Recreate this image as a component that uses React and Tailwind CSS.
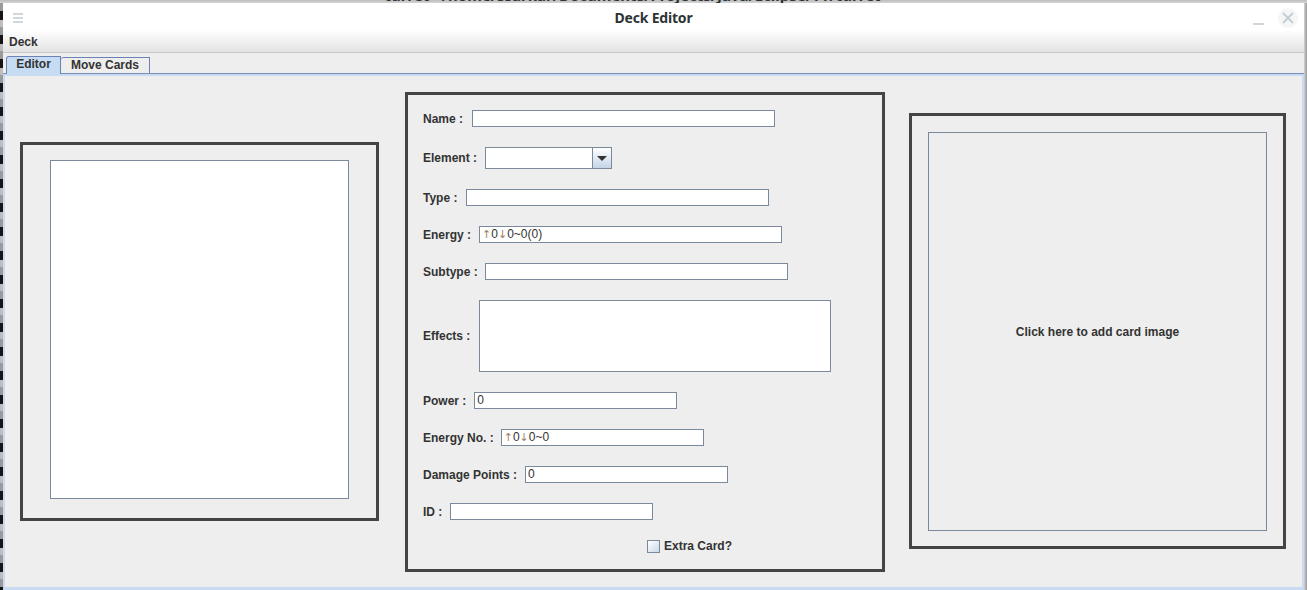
import React from "react";

const LBL = "text-[12px] font-bold text-[#333333] whitespace-nowrap";
const BOX = "border border-[#7a8a9c] bg-white";

function Input({ className = "", value }) {
  return (
    <div className={`${BOX} h-[17px] pl-[2px] text-[12px] leading-[15px] text-[#333333] ${className}`}>
      {value}
    </div>
  );
}

function Arrowed({ parts }) {
  // "↑0↓0~0" style text: arrows rendered thin / lighter
  return parts.map((p, i) =>
    p === "↑" || p === "↓" ? (
      <span key={i} className="text-[11px] text-[#a47e62] font-['DejaVu_Sans',sans-serif]">
        {p}
      </span>
    ) : (
      <span key={i}>{p}</span>
    )
  );
}

function Row({ className, label, children }) {
  return (
    <div className={`flex items-center gap-2 ${className}`}>
      <span className={LBL}>{label}</span>
      {children}
    </div>
  );
}

export default function App() {
  return (
    <div className="w-[1307px] h-[590px] overflow-hidden flex flex-col bg-[#cfcfcf] font-['Liberation_Sans',Arial,sans-serif]">
      {/* window behind, only its title bottom shows */}
      <div className="h-[3px] shrink-0 overflow-hidden flex justify-center pr-[42px] bg-[linear-gradient(to_bottom,#bdbdbd,#d4d4d4)]">
        <div className="-mt-[12px] text-[15px] leading-[15px] font-bold text-[#2e3436] font-['Noto_Sans',sans-serif] whitespace-nowrap">
          turret - /home/ssarkar/Documents/Projects/Java/Eclipse/TT/turret
        </div>
      </div>

      <div className="flex flex-1 min-h-0">
        <div className="w-[3px] shrink-0 bg-[repeating-linear-gradient(to_bottom,#9a9a9a_0px,#9a9a9a_8px,#151515_8px,#151515_17px,#bdbdbd_17px,#bdbdbd_24px)]" />

        {/* Deck Editor window */}
        <div className="w-[1301px] flex flex-col bg-[#eeeeee]">
          <div className="h-[50px] shrink-0 flex flex-col border-b border-[#c8c8c8] bg-[linear-gradient(to_bottom,#ffffff_0px,#ffffff_27px,#e3e3e3_49px)]">
            <div className="h-[30px] grid grid-cols-[1fr_auto_1fr] items-center">
              <div className="pl-[10px] flex -mt-[1px]">
                <svg width="10" height="10" viewBox="0 0 10 10">
                  <rect x="0" y="0" width="10" height="2" fill="#cfd9db" />
                  <rect x="0" y="4" width="10" height="2" fill="#cfd9db" />
                  <rect x="0" y="8" width="10" height="2" fill="#cfd9db" />
                </svg>
              </div>
              <div className="-mt-[2px] text-[14px] font-bold text-[#2e3436] font-['Noto_Sans',sans-serif] tracking-[-0.2px]">
                Deck Editor
              </div>
              <div className="flex justify-end items-center gap-[14px] pr-[6px]">
                <svg width="12" height="12" viewBox="0 0 12 12" className="mt-[5px]">
                  <rect x="1" y="8" width="11" height="2" fill="#cfd7da" />
                </svg>
                <div className="w-[20px] h-[20px] rounded-full bg-[#f5f7f7] flex items-center justify-center">
                  <svg width="12" height="12" viewBox="0 0 12 12">
                    <path d="M1 1 L11 11 M11 1 L1 11" stroke="#c5ced2" strokeWidth="2" />
                  </svg>
                </div>
              </div>
            </div>
            <div className="h-[19px] flex items-center pl-[6px] pb-[2px] text-[12px] font-bold text-[#333333]">
              Deck
            </div>
          </div>

          {/* tabs */}
          <div className="h-[20px] shrink-0 flex items-end pl-[3px] bg-[#eeeeee]">
            <div className="relative z-10 -mb-[1px] w-[55px] h-[18px] rounded-tl-[3px] border-x border-t border-[#6b82b4] bg-[#c5dcf2] flex justify-center text-[12px] leading-[14px] font-bold text-[#333333]">
              Editor
            </div>
            <div className="w-[89px] h-[16px] rounded-tl-[3px] border-r border-t border-[#6b82b4] bg-[#eeeeee] flex justify-center text-[12px] leading-[14px] font-bold text-[#333333]">
              Move Cards
            </div>
          </div>

          {/* tab content */}
          <div className="flex-1 min-h-0 border-t border-[#7a8fb8] flex flex-col">
            <div className="flex-1 min-h-0 border-t-[2px] border-x-[2px] border-b-[3px] border-[#c8dbf1] flex items-start pl-[15px] bg-[#eeeeee]">
              {/* left preview */}
              <div className="mt-[66px] w-[359px] h-[379px] border-[3px] border-[#444444] pt-[15px] pl-[27px]">
                <div className={`${BOX} w-[299px] h-[339px]`} />
              </div>

              {/* form */}
              <div className="mt-[16px] ml-[26px] w-[480px] h-[480px] border-[3px] border-[#444444] pl-[15px] pt-[5px] flex flex-col">
                <Row className="h-[37px]" label="Name :">
                  <Input className="w-[303px] ml-[1px]" />
                </Row>
                <Row className="h-[42px]" label="Element :">
                  <div className="w-[127px] h-[22px] flex border border-[#7a8a9c]">
                    <div className="flex-1 bg-white" />
                    <div className="w-[19px] border-l border-[#7a8a9c] bg-[linear-gradient(to_bottom,#ffffff,#c4d5e8)] flex items-center justify-center">
                      <div className="w-0 h-0 border-x-[5px] border-t-[5px] border-x-transparent border-t-[#333333]" />
                    </div>
                  </div>
                </Row>
                <Row className="h-[37px]" label="Type :">
                  <Input className="w-[303px] ml-[1px]" />
                </Row>
                <Row className="h-[37px]" label="Energy :">
                  <Input className="w-[303px]" value={<Arrowed parts={["↑", "0", "↓", "0~0(0)"]} />} />
                </Row>
                <Row className="h-[37px]" label="Subtype :">
                  <Input className="w-[303px] -ml-[1px]" />
                </Row>
                <Row className="h-[92px]" label="Effects :">
                  <div className={`${BOX} w-[352px] h-[72px] ml-[1px]`} />
                </Row>
                <Row className="h-[37px]" label="Power :">
                  <Input className="w-[203px]" value="0" />
                </Row>
                <Row className="h-[37px]" label="Energy No. :">
                  <Input className="w-[203px] -ml-[1px]" value={<Arrowed parts={["↑", "0", "↓", "0~0"]} />} />
                </Row>
                <Row className="h-[37px]" label="Damage Points :">
                  <Input className="w-[203px]" value="0" />
                </Row>
                <Row className="h-[37px]" label="ID :">
                  <Input className="w-[203px]" />
                </Row>
                <div className="h-[32px] flex items-center gap-[4px] pl-[224px]">
                  <div className="w-[13px] h-[13px] border border-[#7a8a9c] bg-[linear-gradient(to_bottom_right,#ffffff,#c9d8e8)]" />
                  <span className={LBL}>Extra Card?</span>
                </div>
              </div>

              {/* image drop area */}
              <div className="mt-[37px] ml-[24px] w-[377px] h-[436px] border-[3px] border-[#444444] pt-[16px] pl-[16px]">
                <div className="w-[339px] h-[399px] border border-[#7a8a9c] flex items-center justify-center">
                  <span className={LBL}>Click here to add card image</span>
                </div>
              </div>
            </div>
          </div>
        </div>

        <div className="flex-1 bg-[linear-gradient(to_right,#d2d2d2,#9a9a9a)]" />
      </div>
    </div>
  );
}
